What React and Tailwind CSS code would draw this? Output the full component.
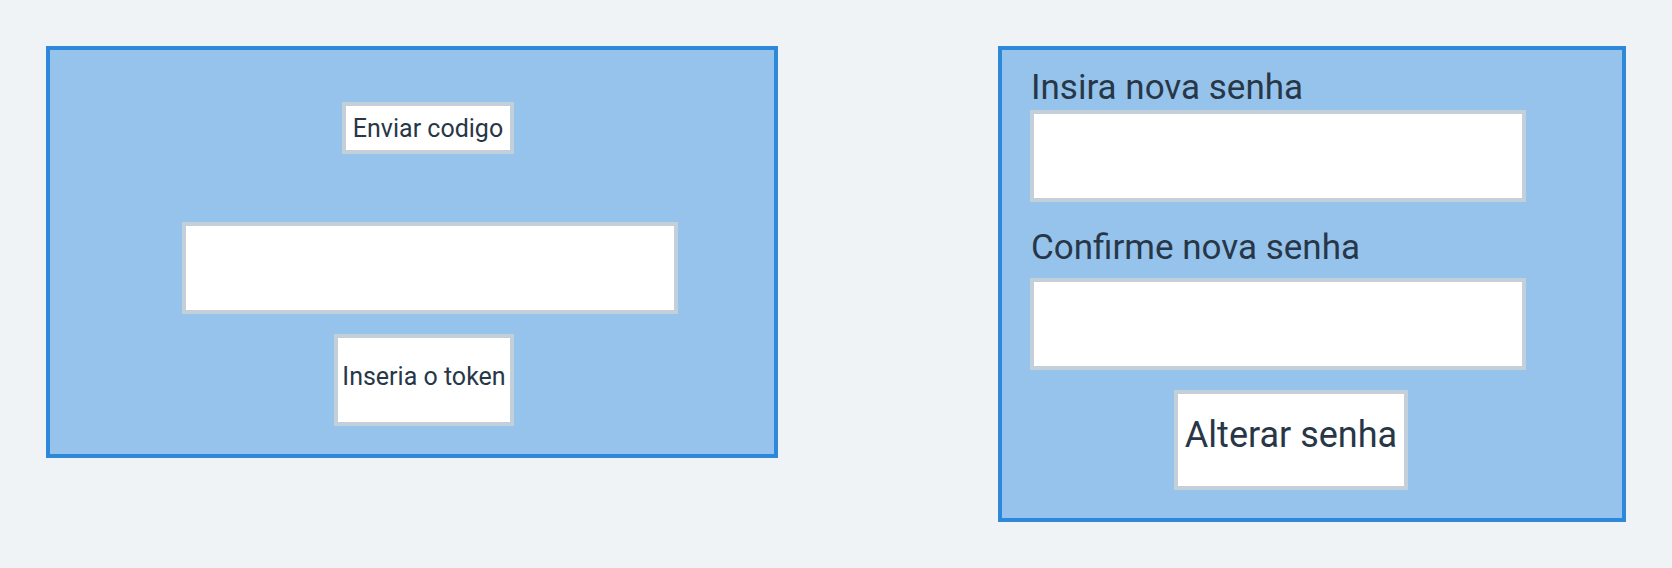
import React from 'react'

const box = 'border-4 border-[#c3d0da] bg-white'

export default function App() {
  return (
    <div className="w-full h-[568px] bg-[#eff3f6] flex justify-between items-start px-[46px] pt-[46px] font-['Roboto',sans-serif] text-[#283747]">
      {/* Token card */}
      <div className="w-[732px] h-[412px] border-4 border-[#2e88da] bg-[#96c3eb] flex flex-col items-center pl-[32px] pt-[52px]">
        <button className={`${box} w-[172px] h-[52px] flex items-center justify-center text-[25px] leading-[25px]`}>
          Enviar codigo
        </button>
        <input type="text" className={`${box} mt-[68px] ml-[4px] w-[496px] h-[92px] outline-none`} />
        <button className={`${box} mt-[20px] mr-[8px] w-[180px] h-[92px] pb-[8px] flex items-center justify-center text-[25px] leading-[25px] whitespace-nowrap`}>
          Inseria o token
        </button>
      </div>

      {/* New password card */}
      <div className="w-[628px] h-[476px] border-4 border-[#2e88da] bg-[#96c3eb] flex flex-col pl-[29px] pt-[17px]">
        <label className="text-[35px] leading-[42px]">Insira nova senha</label>
        <input type="password" className={`${box} mt-[1px] -ml-px w-[496px] h-[92px] outline-none`} />
        <label className="mt-[25px] text-[35px] leading-[42px]">Confirme nova senha</label>
        <input type="password" className={`${box} mt-[9px] -ml-px w-[496px] h-[92px] outline-none`} />
        <div className="w-[520px] mt-[20px] flex justify-center">
          <button className={`${box} w-[234px] h-[100px] pb-[11px] flex items-center justify-center text-[36px] leading-[36px] whitespace-nowrap`}>
            Alterar senha
          </button>
        </div>
      </div>
    </div>
  )
}
